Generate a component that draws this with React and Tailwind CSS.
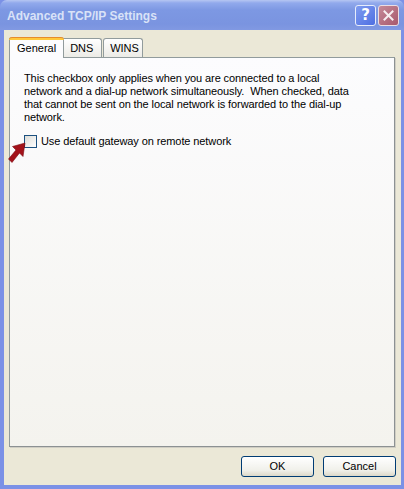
export default function App() {
  const font = { fontFamily: '"Liberation Sans", Arial, sans-serif' };
  return (
    <div className="w-[404px] h-[489px] flex flex-col bg-[#7b91e6]" style={font}>
      {/* Title bar */}
      <div className="h-[30px] rounded-t-[7px] bg-[linear-gradient(to_bottom,#b6c6f2_0px,#91a9ec_3px,#7d98e3_10px,#7a94e0_24px,#8199e2_30px)] flex items-center pl-[7px] pr-[5px] shrink-0">
        <div className="font-bold text-[12px] text-[#d9e2f7] flex-1 pt-[1px]">
          Advanced TCP/IP Settings
        </div>
        <div className="flex gap-[2px]">
          <div className="w-[21px] h-[21px] rounded-[3px] border border-[#e6ecfb] bg-[linear-gradient(135deg,#7f9cf0,#4e6fe2)] flex items-center justify-center text-white font-bold text-[15px]" style={{ fontFamily: '"DejaVu Sans", sans-serif' }}>?</div>
          <div className="w-[21px] h-[21px] rounded-[3px] border border-[#eadde3] bg-[linear-gradient(135deg,#c58a98,#a8596d)] flex items-center justify-center">
            <svg width="11" height="11" viewBox="0 0 11 11">
              <path d="M1.5 1.5 L9.5 9.5 M9.5 1.5 L1.5 9.5" stroke="#f6eef0" strokeWidth="2" strokeLinecap="square" />
            </svg>
          </div>
        </div>
      </div>
      {/* Body */}
      <div className="flex-1 mr-[3px] mb-[4px] ml-[4px] bg-[#ebe8d7] flex flex-col pl-[5px] pr-[6px] pt-[8px] relative">
        {/* Tabs */}
        <div className="flex items-end h-[19px] text-[11px] text-black">
          <div className="relative z-10 h-[21px] -mb-[1px] px-[7px] bg-[#fcfcfe] border-l border-r border-[#919b9c] rounded-t-[3px] flex flex-col">
            <div className="h-[3px] -mx-[8px] rounded-t-[3px] bg-[#ffc83c] border-t border-[#e68b2c]" />
            <div className="flex-1 flex items-center pb-[1px]">General</div>
          </div>
          <div className="h-[19px] px-[6px] w-[38px] border-t border-r border-[#919b9c] rounded-tr-[3px] bg-[linear-gradient(to_bottom,#ffffff,#ecebe6)] flex items-center">DNS</div>
          <div className="h-[19px] ml-[1px] px-[6px] w-[40px] border-t border-l border-r border-[#919b9c] rounded-t-[3px] bg-[linear-gradient(to_bottom,#ffffff,#ecebe6)] flex items-center">WINS</div>
        </div>
        {/* Panel */}
        <div className="h-[390px] border border-[#919b9c] border-r-[#8c9193] border-b-[#8c9193] shadow-[1px_1px_0_#d0cec4] bg-[linear-gradient(to_bottom,#fcfcfe,#f4f3ee)] pl-[14px] pt-[14px] text-[11px] text-black leading-[13px] tracking-[-0.1px]">
          <p className="whitespace-nowrap">
            This checkbox only applies when you are connected to a local<br />
            network and a dial-up network simultaneously.&nbsp; When checked, data<br />
            that cannot be sent on the local network is forwarded to the dial-up<br />
            network.
          </p>
          <div className="flex items-center mt-[11px]">
            <div className="w-[13px] h-[13px] border border-[#1c5180] bg-[linear-gradient(135deg,#dcdcd7,#ffffff)]" />
            <span className="ml-[4px]">Use default gateway on remote network</span>
          </div>
        </div>
        {/* Arrow */}
        <svg className="absolute left-[3px] top-[112px]" width="20" height="26" viewBox="0 0 20 26">
          <path d="M18 1 L16 14.5 L12.5 11 L5 20.5 L1.5 17 L9 8 L5.5 4.5 Z" fill="#a3121a" stroke="#7a0a10" strokeWidth="0.6" strokeLinejoin="round" />
        </svg>
        {/* Buttons */}
        <div className="flex justify-end gap-[9px] mt-[9px] mr-[-1px]">
          <button className="w-[73px] h-[21px] rounded-[3px] border border-[#003c74] bg-[linear-gradient(to_bottom,#ffffff,#f0f0ea_70%,#dcd8c8)] text-[11px] text-black">OK</button>
          <button className="w-[73px] h-[21px] rounded-[3px] border border-[#003c74] bg-[linear-gradient(to_bottom,#ffffff,#f0f0ea_70%,#dcd8c8)] text-[11px] text-black">Cancel</button>
        </div>
      </div>
    </div>
  );
}
